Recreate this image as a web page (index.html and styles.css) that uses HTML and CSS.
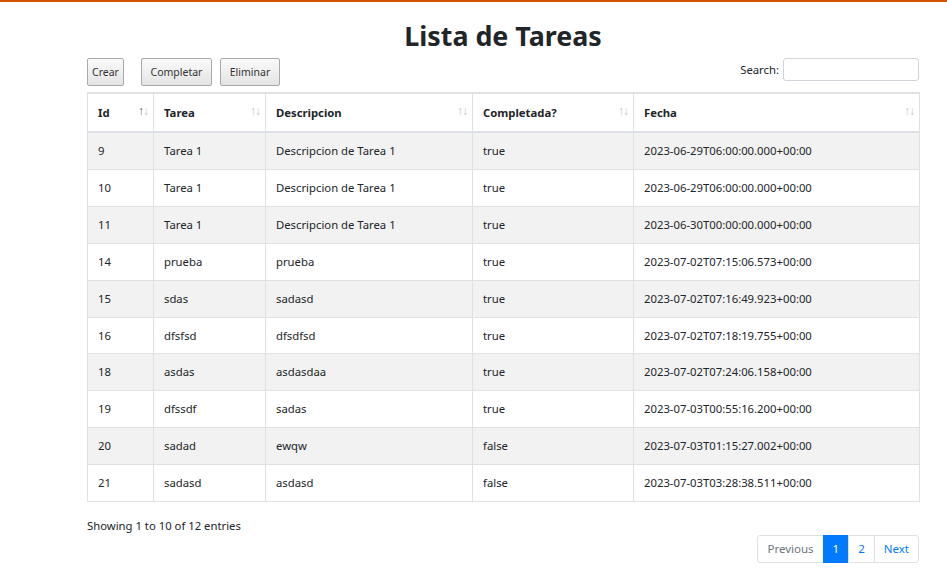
FILE: index.html
```html
<!DOCTYPE html>
<html>
<head>
<meta charset="utf-8">
<link rel="stylesheet" href="styles.css">
</head>
<body>
<div class="topline"></div>
<div class="container">
  <h1 class="title">Lista de Tareas</h1>
  <div class="toolbar">
    <div class="buttons">
      <button class="btn btn-crear">Crear</button>
      <button class="btn btn-completar">Completar</button>
      <button class="btn btn-eliminar">Eliminar</button>
    </div>
    <label class="search">Search: <input type="text" class="search-input"></label>
  </div>
  <table class="tbl">
    <thead>
      <tr>
        <th class="c-id">Id<span class="sort asc"><i class="up">↑</i><i class="dn">↓</i></span></th>
        <th class="c-tarea">Tarea<span class="sort"><i class="up">↑</i><i class="dn">↓</i></span></th>
        <th class="c-desc">Descripcion<span class="sort"><i class="up">↑</i><i class="dn">↓</i></span></th>
        <th class="c-comp">Completada?<span class="sort"><i class="up">↑</i><i class="dn">↓</i></span></th>
        <th class="c-fecha">Fecha<span class="sort"><i class="up">↑</i><i class="dn">↓</i></span></th>
      </tr>
    </thead>
    <tbody>
      <tr><td>9</td><td>Tarea 1</td><td>Descripcion de Tarea 1</td><td>true</td><td>2023-06-29T06:00:00.000+00:00</td></tr>
      <tr><td>10</td><td>Tarea 1</td><td>Descripcion de Tarea 1</td><td>true</td><td>2023-06-29T06:00:00.000+00:00</td></tr>
      <tr><td>11</td><td>Tarea 1</td><td>Descripcion de Tarea 1</td><td>true</td><td>2023-06-30T00:00:00.000+00:00</td></tr>
      <tr><td>14</td><td>prueba</td><td>prueba</td><td>true</td><td>2023-07-02T07:15:06.573+00:00</td></tr>
      <tr><td>15</td><td>sdas</td><td>sadasd</td><td>true</td><td>2023-07-02T07:16:49.923+00:00</td></tr>
      <tr><td>16</td><td>dfsfsd</td><td>dfsdfsd</td><td>true</td><td>2023-07-02T07:18:19.755+00:00</td></tr>
      <tr><td>18</td><td>asdas</td><td>asdasdaa</td><td>true</td><td>2023-07-02T07:24:06.158+00:00</td></tr>
      <tr><td>19</td><td>dfssdf</td><td>sadas</td><td>true</td><td>2023-07-03T00:55:16.200+00:00</td></tr>
      <tr><td>20</td><td>sadad</td><td>ewqw</td><td>false</td><td>2023-07-03T01:15:27.002+00:00</td></tr>
      <tr><td>21</td><td>sadasd</td><td>asdasd</td><td>false</td><td>2023-07-03T03:28:38.511+00:00</td></tr>
    </tbody>
  </table>
  <div class="info">Showing 1 to 10 of 12 entries</div>
  <div class="pager-row">
    <ul class="pagination">
      <li class="page disabled">Previous</li>
      <li class="page active">1</li>
      <li class="page">2</li>
      <li class="page">Next</li>
    </ul>
  </div>
</div>
</body>
</html>
```

FILE: styles.css
```css
* { box-sizing: border-box; }
html, body { margin: 0; padding: 0; background: #fff; }
body {
  font-family: "Segoe UI", "Noto Sans", "Liberation Sans", sans-serif;
  color: #212529;
  font-size: 11.3px;
}
.topline { height: 2px; background: #d35400; }
.container { width: 832px; margin-left: 87px; }
.title {
  margin: 17px 0 0;
  font-size: 26.8px;
  font-weight: 700;
  line-height: 34px;
  text-align: center;
  color: #212529;
}
.toolbar {
  display: flex;
  justify-content: space-between;
  align-items: flex-start;
  margin-top: 5px;
  height: 34px;
}
.buttons { display: flex; }
.btn {
  height: 28px;
  padding: 0;
  font-family: inherit;
  font-size: 10.5px;
  color: #333;
  background: linear-gradient(#fafafa, #e4e4e4);
  border: 1px solid #a9a9a9;
  border-radius: 2px;
  margin-right: 8px;
  text-align: center;
}
.btn-crear { width: 37px; margin-right: 17px; }
.btn-completar { width: 71px; }
.btn-eliminar { width: 60px; }
.search { font-size: 11.3px; color: #212529; display: flex; align-items: center; gap: 4px; }
.search-input {
  width: 136px;
  height: 23px;
  border: 1px solid #ced4da;
  border-radius: 3px;
}
.tbl {
  width: 832px;
  border-collapse: collapse;
  table-layout: fixed;
  border: 1px solid #dee2e6;
}
.tbl th, .tbl td {
  border: 1px solid #dee2e6;
  text-align: left;
  padding: 9px 10px;
  line-height: 17.9px;
  font-size: 11.3px;
  white-space: nowrap;
}
.tbl th {
  position: relative;
  font-weight: 700;
  padding-top: 10px;
  padding-bottom: 9px;
  line-height: 18px;
  border-top: 2px solid #dee2e6;
  border-bottom: 2px solid #dee2e6;
}
.c-id { width: 66px; }
.c-tarea { width: 112px; }
.c-desc { width: 207px; }
.c-comp { width: 161px; }
.c-fecha { width: 286px; }
.tbl tbody tr:nth-child(odd) td { background: #f2f2f2; }
.sort {
  position: absolute;
  right: 5px;
  top: 8px;
  font-size: 12px;
  font-weight: 400;
  letter-spacing: -1px;
}
.sort i { font-style: normal; color: #000; opacity: 0.25; }
.sort.asc .up { opacity: 0.6; }
.info { margin-top: 16px; line-height: 16px; font-size: 11.3px; }
.pager-row { display: flex; justify-content: flex-end; margin-top: 1px; }
.pagination { list-style: none; margin: 0; padding: 0; display: flex; }
.page {
  height: 28px;
  line-height: 26px;
  padding: 0 9px;
  font-size: 11.5px;
  color: #007bff;
  border: 1px solid #dee2e6;
  margin-left: -1px;
  background: #fff;
}
.page:first-child { border-radius: 3px 0 0 3px; }
.page:last-child { border-radius: 0 3px 3px 0; }
.page.disabled { color: #6c757d; }
.page.active { background: #007bff; border-color: #007bff; color: #fff; }
```
